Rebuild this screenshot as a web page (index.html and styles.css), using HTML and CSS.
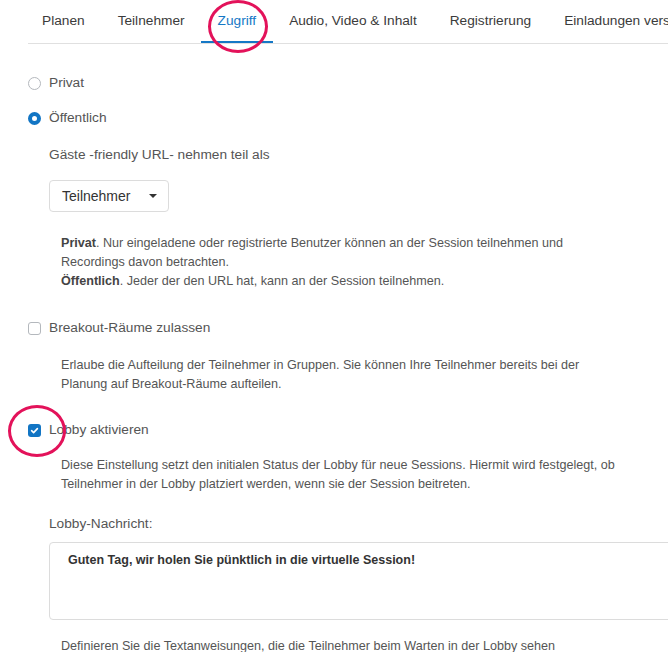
FILE: index.html
```html
<!DOCTYPE html>
<html lang="de">
<head>
<meta charset="utf-8">
<title>Zugriff</title>
<link rel="stylesheet" href="styles.css">
</head>
<body>
<div class="page">
  <nav class="tabs">
    <span class="tab first">Planen</span>
    <span class="tab">Teilnehmer</span>
    <span class="tab active">Zugriff</span>
    <span class="tab">Audio, Video &amp; Inhalt</span>
    <span class="tab">Registrierung</span>
    <span class="tab">Einladungen vers</span>
  </nav>

  <div class="option opt-privat"><span class="radio"></span><span>Privat</span></div>
  <div class="option opt-public"><span class="radio checked"></span><span>Öffentlich</span></div>

  <div class="label guest-label">Gäste -friendly URL- nehmen teil als</div>
  <div class="select"><span>Teilnehmer</span><span class="caret"></span></div>

  <p class="desc desc-access"><b>Privat</b>. Nur eingeladene oder registrierte Benutzer können an der Session teilnehmen und<br>Recordings davon betrachten.<br><b>Öffentlich</b>. Jeder der den URL hat, kann an der Session teilnehmen.</p>

  <div class="option opt-breakout"><span class="checkbox"></span><span>Breakout-Räume zulassen</span></div>
  <p class="desc desc-breakout">Erlaube die Aufteilung der Teilnehmer in Gruppen. Sie können Ihre Teilnehmer bereits bei der<br>Planung auf Breakout-Räume aufteilen.</p>

  <div class="option opt-lobby"><span class="checkbox checked"><svg viewBox="0 0 13 13" width="13" height="13"><path d="M3.6 6.7 L5.6 8.6 L9.4 4.6" fill="none" stroke="#fff" stroke-width="1.6" stroke-linecap="round" stroke-linejoin="round"/></svg></span><span>Lobby aktivieren</span></div>
  <p class="desc desc-lobby">Diese Einstellung setzt den initialen Status der Lobby für neue Sessions. Hiermit wird festgelegt, ob<br>Teilnehmer in der Lobby platziert werden, wenn sie der Session beitreten.</p>

  <div class="label lobby-label">Lobby-Nachricht:</div>
  <div class="textbox">Guten Tag, wir holen Sie pünktlich in die virtuelle Session!</div>
  <p class="desc desc-footer">Definieren Sie die Textanweisungen, die die Teilnehmer beim Warten in der Lobby sehen</p>

  <span class="mark mark-tab"></span>
  <span class="mark mark-lobby"></span>
</div>
</body>
</html>
```

FILE: styles.css
```css
* { box-sizing: border-box; }
html, body {
  margin: 0;
  padding: 0;
  background: #fff;
  overflow: hidden;
}
body {
  font-family: "Liberation Sans", Arial, sans-serif;
  color: #555;
  font-size: 13.7px;
}
.page {
  position: relative;
  width: 668px;
  height: 652px;
  padding-left: 28px;
  overflow: hidden;
}
.tabs {
  display: flex;
  height: 44px;
  border-bottom: 1px solid #e0e0e0;
  white-space: nowrap;
  overflow: hidden;
}
.tab {
  flex: none;
  height: 44px;
  margin-bottom: -1px;
  padding: 0 16.5px;
  line-height: 42px;
  font-size: 13.7px;
  color: #3b3b3b;
  border-bottom: 3px solid transparent;
}
.tab.first { padding-left: 14px; }
.tab.active {
  color: #1578c6;
  border-bottom-color: #1578c6;
}
.option {
  display: flex;
  align-items: center;
  height: 20px;
  line-height: 20px;
  color: #555;
}
.opt-privat { margin-top: 29px; }
.opt-public { margin-top: 15px; }
.opt-breakout { margin-top: 27px; }
.opt-lobby { margin-top: 26px; }
.radio {
  width: 13px;
  height: 13px;
  border-radius: 50%;
  border: 1px solid #b4b8bd;
  margin-right: 8px;
  flex: none;
}
.radio.checked {
  border: 4px solid #1275c4;
  background: #fff;
}
.checkbox {
  width: 13px;
  height: 13px;
  border-radius: 3px;
  border: 1px solid #b4b8bd;
  margin-right: 8px;
  flex: none;
  display: flex;
}
.checkbox.checked {
  border: none;
  background: #1275c4;
}
.label {
  height: 20px;
  line-height: 20px;
  padding-left: 21px;
  color: #555;
}
.guest-label { margin-top: 17px; }
.select {
  margin: 15px 0 0 21px;
  width: 120px;
  height: 32px;
  border: 1px solid #dcdcdc;
  border-radius: 4px;
  display: flex;
  align-items: center;
  justify-content: space-between;
  padding: 0 11px 0 12px;
  font-size: 14px;
  color: #333;
}
.caret {
  width: 0;
  height: 0;
  border-left: 4px solid transparent;
  border-right: 4px solid transparent;
  border-top: 4px solid #333;
}
.desc {
  margin: 0;
  padding-left: 33px;
  font-size: 12.6px;
  line-height: 19px;
  color: #555;
  white-space: nowrap;
}
.desc b { font-weight: bold; color: #444; }
.desc-access { margin-top: 22px; }
.desc-breakout { margin-top: 18px; }
.desc-lobby { margin-top: 16px; }
.lobby-label { margin-top: 20px; }
.textbox {
  margin: 8px 0 0 21px;
  width: 660px;
  height: 78px;
  border: 1px solid #dcdcdc;
  border-radius: 4px;
  padding: 9px 18px;
  font-size: 12.5px;
  font-weight: bold;
  color: #333;
  line-height: 17px;
}
.desc-footer { margin-top: 17px; }
.mark {
  position: absolute;
  border: 3px solid #e3125a;
  border-radius: 50%;
}
.mark-tab {
  left: 208px;
  top: 0px;
  width: 60px;
  height: 53px;
}
.mark-lobby {
  left: 8px;
  top: 405px;
  width: 58px;
  height: 52px;
}
```
